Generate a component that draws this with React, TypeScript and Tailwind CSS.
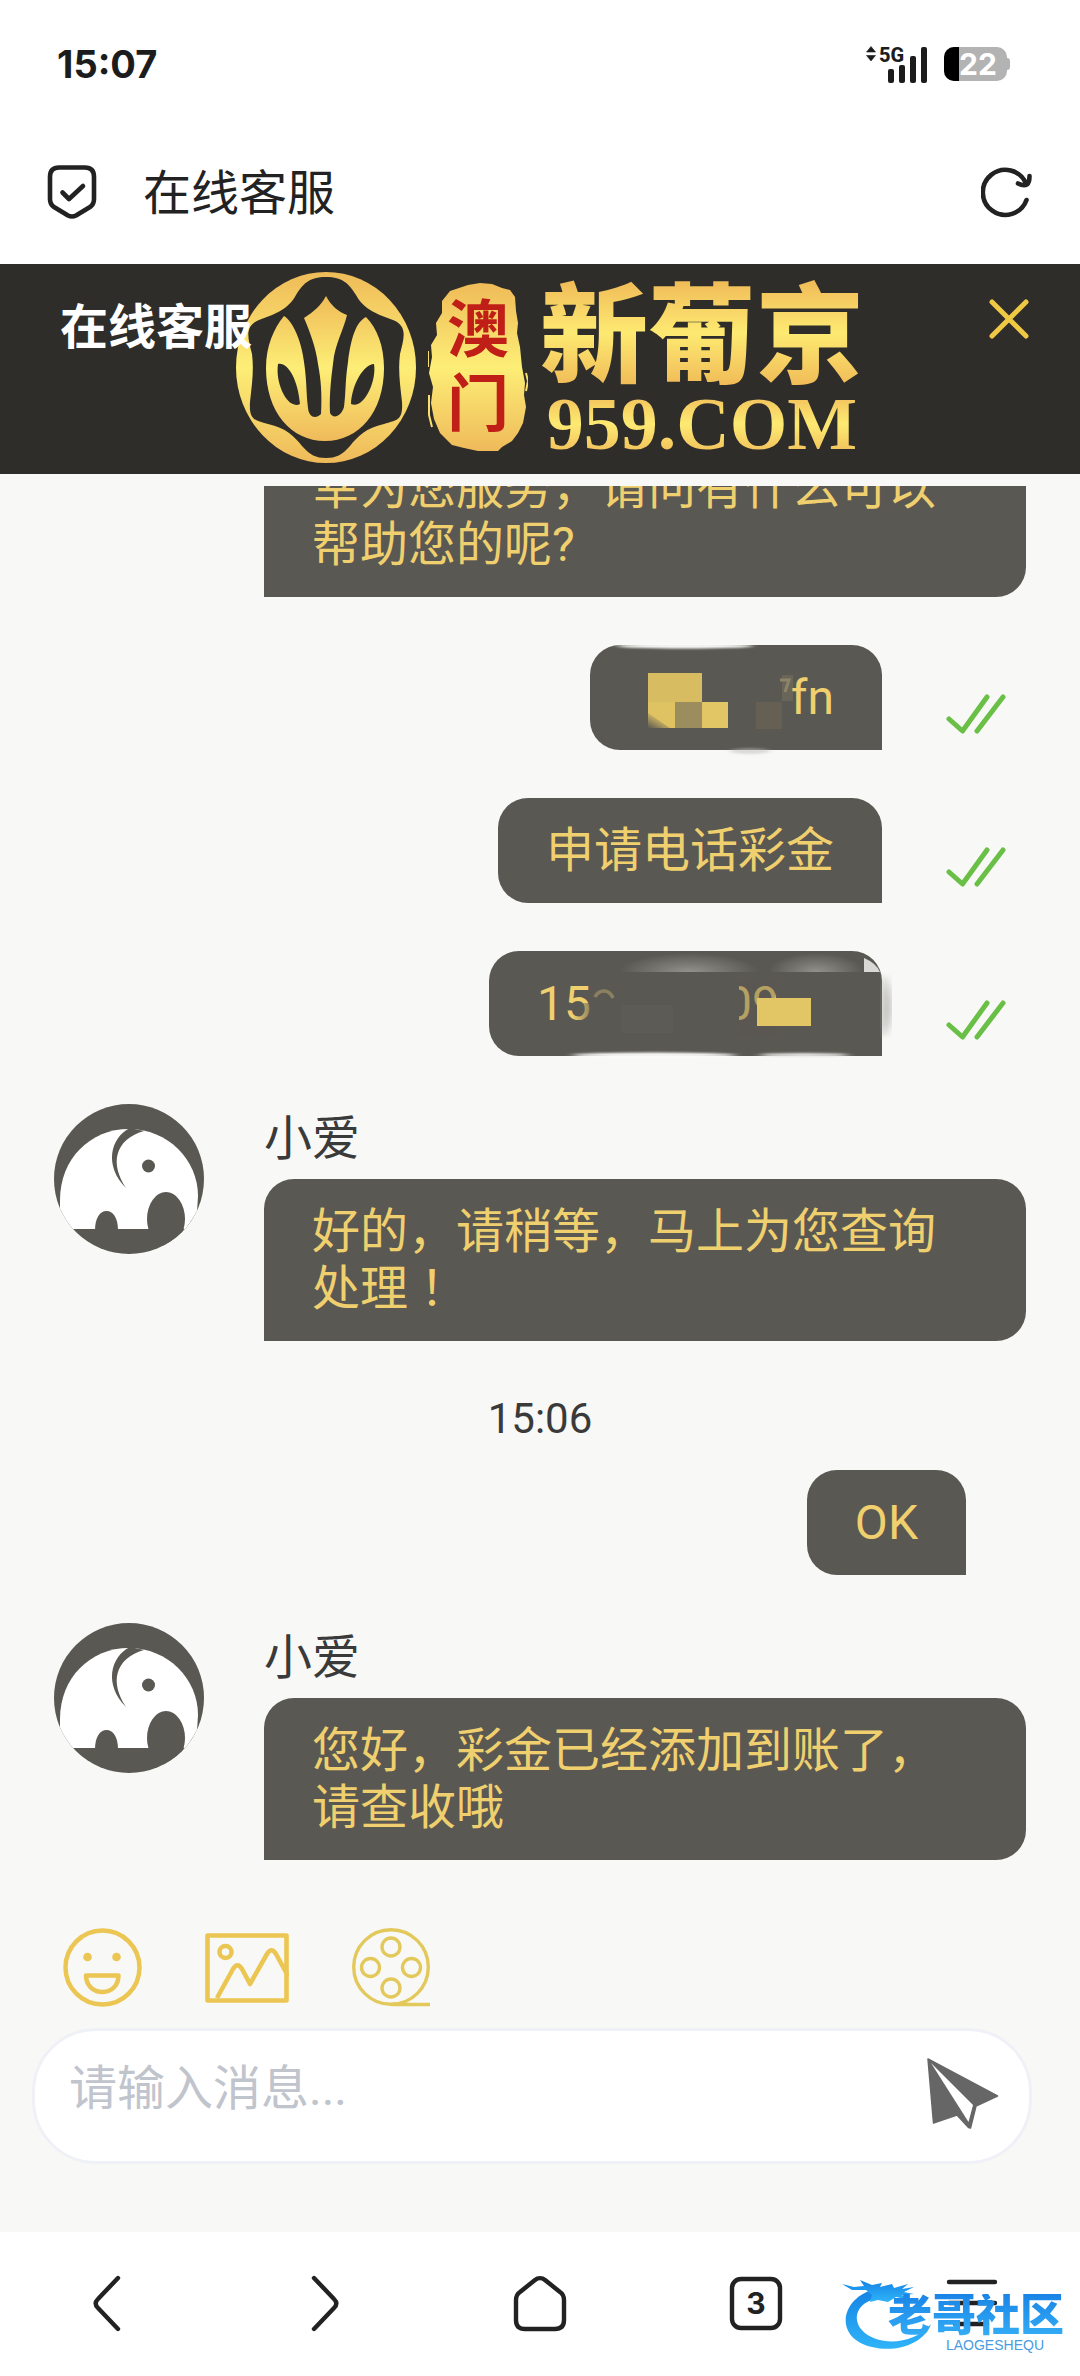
import type { ReactNode } from 'react';

const GoldStops = () => (
  <>
    <stop offset="0" stopColor="#efbb58" />
    <stop offset="0.5" stopColor="#fdee76" />
    <stop offset="1" stopColor="#efba5a" />
  </>
);

const SignalIcon = () => (
  <svg width="62" height="38" viewBox="0 0 62 38" fill="#1c1c1c" aria-hidden="true">
    <path d="M0.5 7 L5 1.5 L9.5 7Z M0.5 10.5 L5 16 L9.5 10.5Z" stroke="#1c1c1c" strokeWidth="0.6" strokeLinejoin="round" />
    <text x="13" y="17" fontSize="20" fontWeight="800" fontFamily="Roboto, sans-serif">5G</text>
    <rect x="22" y="24" width="6" height="14" rx="2" />
    <rect x="33" y="20" width="6" height="18" rx="2" />
    <rect x="44" y="11" width="6" height="27" rx="2" />
    <rect x="55" y="2" width="6" height="36" rx="2" />
  </svg>
);

const ShieldIcon = () => (
  <svg width="50" height="54" viewBox="0 0 50 54" fill="none" stroke="#222" strokeWidth="4.6" strokeLinecap="round" strokeLinejoin="round" aria-hidden="true">
    <path d="M12 2.5 H38 C44 2.5 47 6 47 12 V34 C47 38 46 40 43 42 L29 50.5 C26 52 24 52 21 50.5 L7 42 C4 40 3 38 3 34 V12 C3 6 6 2.5 12 2.5Z" />
    <path d="M15.500 27.500 L22 34 L36 21" />
  </svg>
);

const ReloadIcon = () => (
  <svg width="52" height="52" viewBox="0 0 52 52" fill="none" stroke="#222" strokeWidth="4.6" strokeLinecap="round" strokeLinejoin="round" aria-hidden="true">
    <path d="M45.500 34 A22.500 22.500 0 1 1 45 17.500" />
    <path d="M37 17.500 C40 19 44 19.500 46 18.500 C48 17 48.500 13 48.500 10" />
  </svg>
);

const LotusIcon = () => (
  <svg width="180" height="192" viewBox="0 0 180 192" aria-hidden="true">
    <defs>
      <linearGradient id="lotusGold" x1="0" y1="0" x2="0" y2="1"><GoldStops /></linearGradient>
    </defs>
    <ellipse cx="90" cy="95.500" rx="90" ry="95.500" fill="url(#lotusGold)" />
    <path
      fill="#2e2d2a"
      d="M90 5 C73 5 67 12 60 23 C52 38 37 43 23 48 C8 54 12 66 16 82 C18 98 16 112 14 130 C13 148 18 148 32 152 C50 156 58 164 66 174 C74 183 80 186 90 186 C100 186 106 183 114 174 C122 164 130 156 148 152 C162 148 167 148 166 130 C164 112 162 98 164 82 C168 66 172 54 157 48 C143 43 128 38 120 23 C113 12 107 5 90 5Z"
    />
    <path
      fill="url(#lotusGold)"
      d="M48 44 C38 56 30 74 30 96 C30 140 55 169 89 169 C123 169 148 140 148 96 C148 74 141 56 130 45 C120 50 115 66 112 90 C109 110 110 120 108 135 C105 145 97 147 94 141 C93 120 96 100 98 84 C102 66 108 56 111 43 C103 40 95 34 90 24 C85 34 77 40 68 46 C74 60 80 76 82 92 C85 108 86 122 85 142 C80 147 73 146 72 136 C70 120 71 110 68 90 C66 72 58 50 48 44Z"
    />
    <path fill="#2e2d2a" d="M42 92 C52 90 62 108 64 132 C52 138 39 112 42 92Z M138 92 C128 92 116 112 115 132 C127 138 141 110 138 92Z" />
  </svg>
);

const StampShape = () => (
  <svg className="absolute inset-0" width="100" height="170" viewBox="0 0 100 170" aria-hidden="true">
    <defs>
      <linearGradient id="stampGold" x1="0" y1="0" x2="0" y2="1"><GoldStops /></linearGradient>
    </defs>
    <path
      fill="url(#stampGold)"
      d="M40 2 L52 0 L64 1 L74 5 L82 7 L87 14 L88 28 L90 40 L89 50 L92 64 L94 84 L97 100 L96 112 L98 124 L95 140 L90 150 L84 158 L74 164 L70 168 L50 168 L36 165 L24 162 L12 150 L6 136 L3 120 L5 104 L1 90 L4 74 L3 62 L9 52 L8 40 L14 30 L14 18 L22 8Z"
    />
    <path stroke="#f8df6e" strokeWidth="2" fill="none" d="M0 68 V84 M1 112 V132 L4 144 M98 90 L100 98 L98 108" />
  </svg>
);

const CloseIcon = () => (
  <svg width="40" height="40" viewBox="0 0 40 40" stroke="#f0c944" strokeWidth="5" strokeLinecap="round" aria-hidden="true">
    <path d="M3 3 L37 37 M37 3 L3 37" />
  </svg>
);

const ElephantAvatar = () => (
  <svg className="shrink-0" width="150" height="150" viewBox="0 0 150 150" aria-hidden="true">
    <defs>
      <clipPath id="avatarCircle"><circle cx="75" cy="75" r="75" /></clipPath>
    </defs>
    <g clipPath="url(#avatarCircle)">
      <rect width="150" height="150" fill="#5a5853" />
      <path fill="#fff" d="M6 96 C6 55 36 25 75 25 C114 25 144 56 144 92 L143 108 L132 125 H6Z" />
      <path fill="#5a5853" d="M41 126 C41 114 46 107 52.500 107 S64 114 64 126Z" />
      <ellipse cx="112" cy="115" rx="19" ry="27" fill="#5a5853" />
      <path fill="#5a5853" d="M76 24 C56 34 50 62 72 84 C56 60 60 36 90 27Z" />
      <circle cx="94.500" cy="62" r="6.500" fill="#5a5853" />
    </g>
  </svg>
);

const DoubleCheck = () => (
  <svg className="ml-16 mr-5 shrink-0" width="60" height="40" viewBox="0 0 60 40" fill="none" stroke="#6abf47" strokeWidth="5" strokeLinecap="round" strokeLinejoin="round" role="img" aria-label="已读">
    <path d="M3 25 L16.500 37 L41 3 M31 37 L57 3" />
  </svg>
);

const SmileIcon = () => (
  <svg width="79" height="79" viewBox="0 0 79 79" fill="none" stroke="#ecc653" strokeWidth="4.500" aria-hidden="true">
    <circle cx="39.500" cy="39.500" r="37" />
    <path d="M23 47.500 H55.500 C55.500 57 49 64 39.500 64 S23 57 23 47.500Z" strokeLinejoin="round" />
    <circle cx="24.500" cy="29" r="4.300" fill="#ecc653" stroke="none" />
    <circle cx="53.500" cy="29" r="4.300" fill="#ecc653" stroke="none" />
  </svg>
);

const PictureIcon = () => (
  <svg width="84" height="70" viewBox="0 0 84 70" fill="none" stroke="#ecc653" strokeWidth="4.600" strokeLinejoin="round" aria-hidden="true">
    <rect x="2.500" y="2.500" width="79" height="65" />
    <circle cx="20.500" cy="19" r="6" />
    <path d="M12 65 L28 36 C31 31 34 31 37 36 L45 51 L62 21 C65 16 68 16 71 21 L83 43" />
  </svg>
);

const FilmIcon = () => (
  <svg width="79" height="79" viewBox="0 0 79 79" fill="none" stroke="#e3c95c" strokeWidth="3.400" aria-hidden="true">
    <circle cx="39" cy="39" r="37.300" />
    <circle cx="39" cy="19" r="9" />
    <circle cx="18.500" cy="39.500" r="9" />
    <circle cx="59.500" cy="39.500" r="9" />
    <circle cx="39" cy="60" r="9" />
    <path d="M39 76.500 H78" />
  </svg>
);

const SendIcon = () => (
  <svg width="72" height="72" viewBox="0 0 72 72" aria-hidden="true">
    <path fill="#666" stroke="#666" strokeWidth="1.500" strokeLinejoin="round" d="M1 1 L70.500 38 L49 48 L43.500 70 L41.500 69.500 L30 57 L6.500 65Z" />
    <path fill="#fff" d="M4 5 L46 47 L41.500 64Z" />
  </svg>
);

// smudged parts of the account name
const NameMosaic = () => (
  <svg className="pointer-events-none absolute inset-0 overflow-visible" width="292" height="105" viewBox="0 0 292 105" aria-hidden="true">
    <defs>
      <filter id="softName" x="-20%" y="-200%" width="140%" height="500%"><feGaussianBlur stdDeviation="3 1" /></filter>
      <linearGradient id="nameCorner" x1="0" y1="1" x2="0.600" y2="0.300"><stop offset="0" stopColor="#5a5853" /><stop offset="1" stopColor="#5a5853" stopOpacity="0" /></linearGradient>
    </defs>
    <ellipse cx="95" cy="1" rx="68" ry="2.500" fill="#fafaf8" filter="url(#softName)" />
    <ellipse cx="160" cy="106" rx="20" ry="3" fill="#bdbcb9" filter="url(#softName)" opacity="0.500" />
    <rect x="58" y="28" width="54" height="29" fill="#d8bc62" />
    <rect x="58" y="57" width="27" height="26" fill="#dfc363" />
    <path d="M58 68 L80 83 H58Z" fill="url(#nameCorner)" />
    <rect x="85" y="57" width="27" height="26" fill="#9c8d5e" />
    <rect x="112" y="57" width="26" height="26" fill="#e2c564" />
    <rect x="166" y="57" width="26" height="27" fill="#656053" />
    <path d="M190 35 H199 L195 47" fill="none" stroke="#8d8468" strokeWidth="3" />
    <rect x="192" y="30" width="11" height="26" fill="#8d8468" opacity="0.300" />
  </svg>
);

// smudged parts of the phone number
const PhoneMosaic = () => (
  <svg className="pointer-events-none absolute inset-0 overflow-visible" width="393" height="105" viewBox="0 0 393 105" aria-hidden="true">
    <defs>
      <filter id="softPhone" x="-20%" y="-200%" width="140%" height="500%"><feGaussianBlur stdDeviation="5 1" /></filter>
      <linearGradient id="fadeDigits"><stop offset="0" stopColor="#5a5853" stopOpacity="0" /><stop offset="0.600" stopColor="#5a5853" /></linearGradient>
      <radialGradient id="haze" cx="0.500" cy="1" r="0.500" gradientTransform="translate(0 -1) scale(1 2)">
        <stop offset="0" stopColor="#92918c" />
        <stop offset="1" stopColor="#92918c" stopOpacity="0" />
      </radialGradient>
    </defs>
    <rect x="130" y="2" width="140" height="19" fill="url(#haze)" />
    <rect x="280" y="2" width="95" height="19" fill="url(#haze)" />
    <path d="M375 7 Q387 12 391 21 H375Z" fill="#d9d8d5" />
    <path d="M394 22 Q402 40 401 60 Q400 76 393 88Z" fill="#8b8a86" filter="url(#softPhone)" opacity="0.700" />
    <ellipse cx="165" cy="104" rx="82" ry="2.500" fill="#fafaf8" filter="url(#softPhone)" />
    <ellipse cx="315" cy="104" rx="45" ry="2" fill="#e8e7e4" filter="url(#softPhone)" />
    <path d="M106 46 Q109 40 115 40 T124 47" fill="none" stroke="#8b8161" strokeWidth="3.500" />
    <rect x="84" y="52" width="46" height="30" fill="url(#fadeDigits)" />
    <rect x="132" y="54" width="52" height="28" fill="#5d5b56" />
    <rect x="236" y="30" width="14" height="55" fill="#5a5853" />
    <rect x="250" y="30" width="36" height="55" fill="#5a5853" opacity="0.400" />
    <rect x="268" y="47" width="54" height="28" fill="#e2c564" />
  </svg>
);

const Bubble = ({ children, side }: { children: ReactNode; side: 'agent' | 'user' }) => (
  <div
    className={
      side === 'agent'
        ? 'rounded-[30px] rounded-bl-none bg-[#5a5853] px-12 py-6 leading-[57px] text-[#f0d06e]'
        : 'relative rounded-[30px] rounded-br-none bg-[#5a5853] px-12 py-6 leading-[57px] text-[#f0d06e]'
    }
  >
    {children}
  </div>
);

const AgentMessage = ({ children }: { children: ReactNode }) => (
  <article className="flex items-start gap-[60px]">
    <ElephantAvatar />
    <div className="min-w-0 flex-1">
      <h2 className="mb-1.5 leading-[69px] text-[#3a3a3a]">小爱</h2>
      <Bubble side="agent">{children}</Bubble>
    </div>
  </article>
);

const UserMessage = ({ children }: { children: ReactNode }) => (
  <article className="flex items-center justify-end">
    <Bubble side="user">{children}</Bubble>
    <div className="pt-8">
      <DoubleCheck />
    </div>
  </article>
);

const navButtons = [
  {
    label: '后退',
    icon: <path d="M40 4 L20 25 C17 28 17 31 20 34 L40 55" />,
  },
  {
    label: '前进',
    icon: <path d="M20 4 L40 25 C43 28 43 31 40 34 L20 55" />,
  },
  {
    label: '主页',
    icon: <path d="M25 6 C28 3.500 32 3.500 35 6 L50 18 C53 20 54 22 54 26 V46 C54 52 51 55 45 55 H15 C9 55 6 52 6 46 V26 C6 22 7 20 10 18Z" />,
  },
  {
    label: '标签页',
    icon: (
      <>
        <rect x="6" y="5" width="48" height="49" rx="9" />
        <text x="30" y="40" textAnchor="middle" fontSize="30" fontWeight="700" fontFamily="Inter, sans-serif" fill="#222" stroke="none">3</text>
      </>
    ),
  },
  {
    label: '菜单',
    icon: <path d="M7 8 H53 M7 29 H53 M13 50 H45" />,
  },
];

const Watermark = () => (
  <div className="pointer-events-none absolute right-4 bottom-6 flex h-[72px] w-[222px] flex-col items-end justify-end">
    <svg className="absolute inset-0" width="100" height="72" viewBox="0 0 100 72" aria-hidden="true">
      <defs>
        <linearGradient id="dragonBlue" x1="0" y1="0" x2="0" y2="1">
          <stop offset="0" stopColor="#1583e6" />
          <stop offset="1" stopColor="#2fb4f8" />
        </linearGradient>
      </defs>
      <path fill="url(#dragonBlue)" d="M30 10 C-2 20 -8 58 30 67 C54 73 82 64 89 44 C76 60 52 65 34 59 C8 50 8 24 36 18Z" />
      <path fill="url(#dragonBlue)" d="M0 4 L12 7 L22 6 L18 0 L30 5 L40 3 L38 7 L50 4 L52 8 L66 4 L60 9 L72 7 L62 12 L72 14 L60 15 L68 20 L54 17 L46 22 L36 20 L28 22 L30 15 L24 10 L10 10Z" />
    </svg>
    <p className="relative bg-linear-to-b from-[#1a84e6] to-[#35aef6] bg-clip-text text-[44px] leading-[44px] font-black text-transparent">老哥社区</p>
    <p className="relative mr-5 font-['Liberation_Sans',sans-serif] text-[14px] leading-[14px] text-[#4a9be0]">LAOGESHEQU</p>
  </div>
);

const App = () => {
  return (
    <div lang="zh-CN" className="flex min-h-screen flex-col bg-[#f8f8f6] font-[Roboto,'Noto_Sans_CJK_SC',sans-serif] text-[48px]">
      {/* STATUS BAR */}
      <div className="flex h-32 items-center bg-white pr-[70px] pl-[57px]">
        <time className="flex-1 font-['Inter',sans-serif] text-[38px] leading-[48px] font-bold text-[#1c1c1c]">15:07</time>
        <SignalIcon />
        <div className="ml-4 flex h-[34px] w-[63px] items-center rounded-[10px] bg-[#b3b3b3]">
          <span className="h-full w-[15px] rounded-l-[10px] bg-black" />
          <span className="font-['Inter',sans-serif] text-[30px] leading-[34px] font-bold text-white">22</span>
        </div>
        <span className="h-3 w-[3px] rounded-r-sm bg-[#b3b3b3]" />
      </div>

      {/* BROWSER BAR */}
      <header className="flex h-[136px] items-center bg-white pr-[47px] pb-2 pl-[47px]">
        <ShieldIcon />
        <h1 className="ml-[46px] flex-1 pt-1 leading-[60px] text-[#222]">在线客服</h1>
        <button type="button" aria-label="刷新"><ReloadIcon /></button>
      </header>

      {/* BRAND BANNER */}
      <section className="relative flex h-[210px] items-start justify-between bg-[#2e2d2a] pr-[51px] pl-[60px]">
        <div className="absolute inset-0 flex items-center justify-center gap-3 pb-0.5 pl-5">
          <LotusIcon />
          <div className="relative flex h-[170px] w-[100px] flex-col items-center justify-center font-bold text-[#c01f18]">
            <StampShape />
            <span className="relative text-[62px] leading-[74px]">澳</span>
            <span className="relative text-[62px] leading-[74px]">门</span>
          </div>
          <div className="flex flex-col items-center">
            <span className="bg-linear-to-b from-[#efb856] via-[#fdea72] to-[#efb856] bg-clip-text pt-2 text-[108px] leading-[104px] font-black text-transparent">新葡京</span>
            <span className="bg-linear-to-b from-[#efb856] via-[#fdea72] to-[#efb856] bg-clip-text font-['Liberation_Serif',serif] text-[74px] leading-[70px] font-bold text-transparent">959.COM</span>
          </div>
        </div>
        <h2 className="relative pt-[34px] leading-[60px] font-bold text-white">在线客服</h2>
        <button type="button" aria-label="关闭" className="relative mt-[35px]"><CloseIcon /></button>
      </section>

      {/* MESSAGES */}
      <main className="mt-3 flex flex-1 flex-col gap-12 overflow-hidden px-[54px]">
        <div className="-mt-[51px] ml-[210px]">
          <Bubble side="agent">幸为您服务，请问有什么可以帮助您的呢?</Bubble>
        </div>
        <UserMessage>
          <NameMosaic />
          <span className="flex w-[196px] justify-end">fn</span>
        </UserMessage>
        <UserMessage>申请电话彩金</UserMessage>
        <UserMessage>
          <span className="flex w-[297px] gap-[134px]">
            <span>15</span>
            <span>09</span>
          </span>
          <PhoneMosaic />
        </UserMessage>
        <AgentMessage>
          好的，请稍等，马上为您查询处理<span lang="zh-TW" className="font-[Roboto,'Noto_Sans_CJK_TC',sans-serif]">！</span>
        </AgentMessage>
        <div>
          <time className="mb-[21px] block text-center text-[42px] leading-[60px] text-[#3a3a3a]">15:06</time>
          <div className="mr-[60px] flex justify-end">
            <Bubble side="user">OK</Bubble>
          </div>
        </div>
        <AgentMessage>您好，彩金已经添加到账了，请查收哦</AgentMessage>
      </main>

      {/* COMPOSER */}
      <form className="pt-[68px] pr-12 pb-[68px] pl-8">
        <div className="flex items-center gap-[63px] pl-[31px]">
          <button type="button" aria-label="表情"><SmileIcon /></button>
          <button type="button" aria-label="图片"><PictureIcon /></button>
          <button type="button" aria-label="视频"><FilmIcon /></button>
        </div>
        <div className="mt-[21px] flex h-[136px] items-start rounded-[64px] border-3 border-[#eff1f7] bg-white pr-[30px] pl-[34px]">
          <textarea
            aria-label="消息"
            rows={1}
            placeholder="请输入消息..."
            className="mt-7 h-[60px] min-w-0 flex-1 resize-none overflow-hidden leading-[60px] outline-none placeholder:text-[#c0c4cc]"
          />
          <button type="submit" aria-label="发送" className="mt-[27px]"><SendIcon /></button>
        </div>
      </form>

      {/* BOTTOM NAVIGATION */}
      <nav className="relative grid h-36 grid-cols-5 bg-white">
        {navButtons.map((item) => (
          <button key={item.label} type="button" aria-label={item.label} className="flex items-center justify-center">
            <svg width="60" height="60" viewBox="0 0 60 60" fill="none" stroke="#222" strokeWidth="4.400" strokeLinecap="round" strokeLinejoin="round">
              {item.icon}
            </svg>
          </button>
        ))}
        <Watermark />
      </nav>
    </div>
  );
};

export default App;
